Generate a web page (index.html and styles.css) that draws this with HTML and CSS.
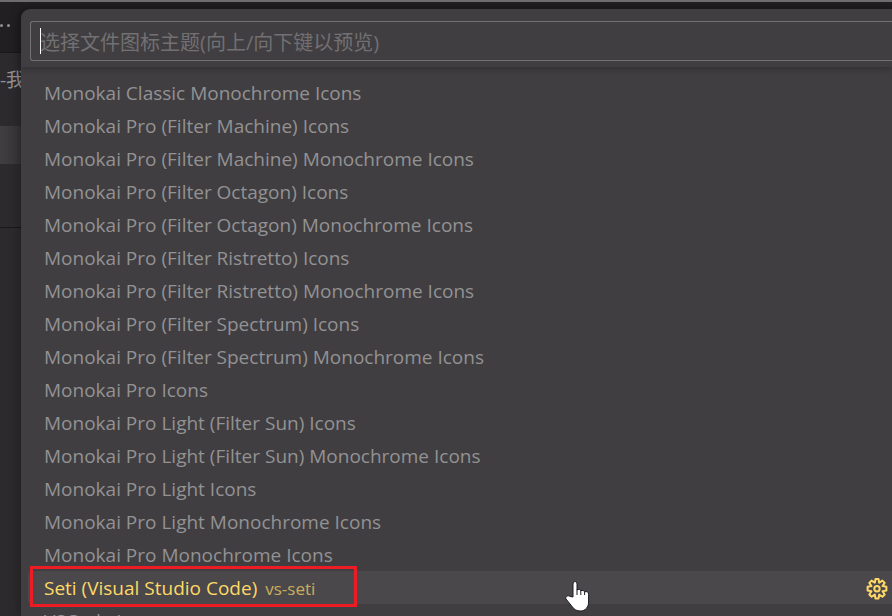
FILE: index.html
```html
<!DOCTYPE html>
<html lang="zh-CN">
<head>
<meta charset="utf-8">
<title>选择文件图标主题</title>
<link rel="stylesheet" href="styles.css">
</head>
<body>
<div class="window">
  <aside class="sidebar">
    <div class="sidebar-title"><span class="dot"></span><span class="dot"></span></div>
    <div class="sidebar-tree">
      <div class="tree-label">-我</div>
      <div class="tree-selected"></div>
      <div class="tree-rest"></div>
    </div>
  </aside>
  <main class="picker">
    <div class="picker-header">
      <input class="picker-input" type="text" aria-label="选择文件图标主题" placeholder="选择文件图标主题(向上/向下键以预览)">
      <span class="caret"></span>
    </div>
    <ul class="picker-list">
      <li class="item">Monokai Classic Monochrome Icons</li>
      <li class="item">Monokai Pro (Filter Machine) Icons</li>
      <li class="item">Monokai Pro (Filter Machine) Monochrome Icons</li>
      <li class="item">Monokai Pro (Filter Octagon) Icons</li>
      <li class="item">Monokai Pro (Filter Octagon) Monochrome Icons</li>
      <li class="item">Monokai Pro (Filter Ristretto) Icons</li>
      <li class="item">Monokai Pro (Filter Ristretto) Monochrome Icons</li>
      <li class="item">Monokai Pro (Filter Spectrum) Icons</li>
      <li class="item">Monokai Pro (Filter Spectrum) Monochrome Icons</li>
      <li class="item">Monokai Pro Icons</li>
      <li class="item">Monokai Pro Light (Filter Sun) Icons</li>
      <li class="item">Monokai Pro Light (Filter Sun) Monochrome Icons</li>
      <li class="item">Monokai Pro Light Icons</li>
      <li class="item">Monokai Pro Light Monochrome Icons</li>
      <li class="item">Monokai Pro Monochrome Icons</li>
      <li class="item item-active">
        <span class="item-name">Seti (Visual Studio Code)</span>
        <span class="item-note">vs-seti</span>
        <button class="gear" type="button" aria-label="管理">
          <svg viewBox="0 0 24 24" width="24" height="24" fill="none" stroke="currentColor" stroke-width="2" stroke-linejoin="round">
            <path d="M10.500 2h3l.7 3.800 3.200-2.200 2.300 2.300-2.200 3.200 3.900.7v3.800l-3.900.7 2.200 3.200-2.300 2.300-3.200-2.200-.7 3.900h-3l-.7-3.900-3.200 2.200-2.300-2.300 2.200-3.200-3.900-.7V9.800l3.900-.7-2.200-3.200 2.300-2.300 3.200 2.200z"/>
            <circle cx="12" cy="11.700" r="2.700"/>
          </svg>
        </button>
        <span class="highlight"></span>
        <svg class="pointer" viewBox="0 0 26 32" width="26" height="32">
          <path d="M8 17V4.200C8 .7 12 .7 12 4.200V10c1.500-1.200 3.500-.5 3.800.8 1.500-.9 3.400-.3 3.800 1 2-.8 4 .3 4 2.400V22c0 5-3.200 9-8 9-4 0-6.300-1.300-8.500-4.500L1 19c-1-2 1.500-4 3.500-2.800z" fill="#fff" stroke="#1b1b22"/>
          <path d="M12 9.500V15M15.800 10.800V15M19.600 11.800V15" fill="none" stroke="#1b1b22"/>
        </svg>
      </li>
      <li class="item">
        <span class="item-name">VSCode Icons</span>
        <span class="item-note">vscode-icons</span>
      </li>
    </ul>
  </main>
</div>
</body>
</html>
```
FILE: styles.css
```css
* { box-sizing: border-box; }
body {
  margin: 0;
  background: #2d2a2e;
  color: #939293;
  font: 19px/33px "Open Sans", "Noto Sans CJK SC", sans-serif;
}
.window {
  display: flex;
  height: 100vh;
  overflow: hidden;
  border-top: 2px solid #6d6c6e;
  background: linear-gradient(#221f22 0 50px, #2d2a2e 50px);
}
.sidebar {
  flex: 0 0 21px;
  overflow: hidden;
  white-space: nowrap;
}
.sidebar-title {
  display: flex;
  gap: 4px;
  height: 51px;
  padding-top: 22px;
  border-bottom: 1px solid #19181a;
}
.dot {
  width: 3px;
  height: 3px;
  border-radius: 50%;
  background: #939293;
}
.tree-label { height: 73px; padding-top: 11px; }
.tree-selected { height: 38px; background: linear-gradient(90deg, #403e41, #353436); }
.tree-rest { height: 64px; border-bottom: 1px solid #19181a; }
.picker {
  flex: 1;
  min-width: 0;
  margin-top: 7px;
  border-top-left-radius: 9px;
  background: #403e41;
  box-shadow: 0 0 12px rgba(0, 0, 0, .4);
}
.picker-header {
  position: relative;
  height: 58px;
  padding: 12px 0 0 9px;
  border-top-left-radius: 9px;
  box-shadow: 0 3px 6px rgba(0, 0, 0, .2);
}
.picker-input {
  display: block;
  width: 100%;
  height: 40px;
  padding: 2px 9px 0;
  border: 1px solid #727072;
  border-right: 0;
  border-radius: 3px 0 0 3px;
  background: #403e41;
  color: #fcfcfa;
  font: inherit;
  font-size: 20px;
  outline: none;
}
.picker-input::placeholder { color: #727072; opacity: 1; }
.caret {
  position: absolute;
  left: 19px;
  top: 19px;
  width: 1px;
  height: 26px;
  background: #fff;
}
.picker-list { margin: 0; padding: 9px 0 0 7px; list-style: none; }
.item {
  display: flex;
  align-items: center;
  gap: 8px;
  height: 33px;
  padding: 2px 0 0 16px;
  white-space: nowrap;
}
.item-active {
  position: relative;
  border-radius: 4px 0 0 4px;
  background: #4a484b;
  color: #ffd866;
}
.item-note { font-size: 17px; opacity: .7; }
.gear {
  display: flex;
  margin: 0 3px 0 auto;
  padding: 0;
  border: 0;
  background: none;
  color: inherit;
}
.highlight {
  position: absolute;
  left: 2px;
  top: -5px;
  width: 327px;
  height: 41px;
  border: 3px solid #ed1c24;
}
.pointer { position: absolute; left: 537px; top: 9px; z-index: 1; }
```
